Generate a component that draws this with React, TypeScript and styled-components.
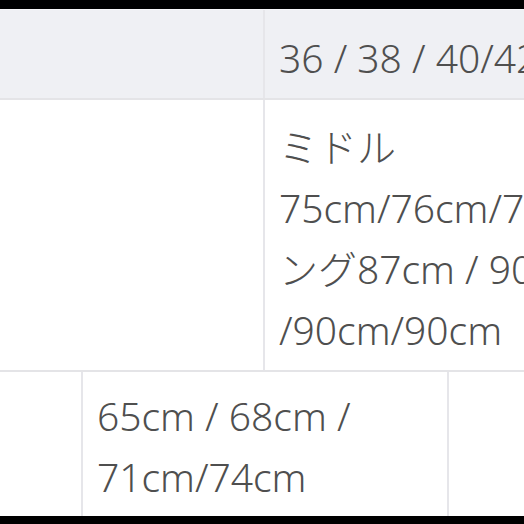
import React from "react";
import styled, { createGlobalStyle } from "styled-components";

const GlobalStyle = createGlobalStyle`
  html, body {
    margin: 0;
    padding: 0;
    background: #000;
  }
  body {
    font-family: "Noto Sans", "Noto Sans CJK JP", sans-serif;
  }
`;

// 화면 전체 (위아래 검은 띠 포함)
const Screen = styled.div`
  width: 524px;
  height: 524px;
  overflow: hidden;
  background: #000;
  display: flex;
  flex-direction: column;
  padding-top: 9px;
  box-sizing: border-box;
`;

const Table = styled.div`
  display: flex;
  flex-direction: column;
  background: #fff;
  border-top: 1px solid #f7f7f9;
  width: 100%;
`;

const Row = styled.div<{ $height: number; $head?: boolean; $last?: boolean }>`
  display: flex;
  height: ${(p) => p.$height}px;
  background: ${(p) => (p.$head ? "#eff0f4" : "#fff")};
  border-bottom: ${(p) => (p.$last ? "none" : "2px solid #e4e4e7")};
  box-sizing: border-box;
`;

const Cell = styled.div<{ $width?: number; $divider?: boolean; $pad?: number }>`
  flex: ${(p) => (p.$width ? `0 0 ${p.$width}px` : "1 1 auto")};
  min-width: 0;
  overflow: hidden;
  box-sizing: border-box;
  border-right: ${(p) => (p.$divider ? "2px solid #e6e6ea" : "none")};
  padding: ${(p) => p.$pad ?? 18}px 0 0 14px;
  color: #4f4f4f;
  font-size: 39px;
  font-weight: 300;
  line-height: 61px;
  white-space: nowrap;
  letter-spacing: 0;
`;

export default function App() {
  return (
    <>
      <GlobalStyle />
      <Screen>
        <Table>
          <Row $height={90} $head>
            <Cell $width={265} $divider />
            <Cell $pad={17}>36 / 38 / 40/42/44</Cell>
          </Row>
          <Row $height={272}>
            <Cell $width={265} $divider />
            <Cell $pad={16}>
              ミドル
              <br />
              75cm/76cm/77cm/ロ
              <br />
              ング87cm / 90cm
              <br />
              /90cm/90cm
            </Cell>
          </Row>
          <Row $height={144} $last>
            <Cell $width={83} $divider />
            <Cell $width={366} $divider $pad={13}>
              65cm / 68cm /
              <br />
              71cm/74cm
            </Cell>
            <Cell />
          </Row>
        </Table>
      </Screen>
    </>
  );
}
